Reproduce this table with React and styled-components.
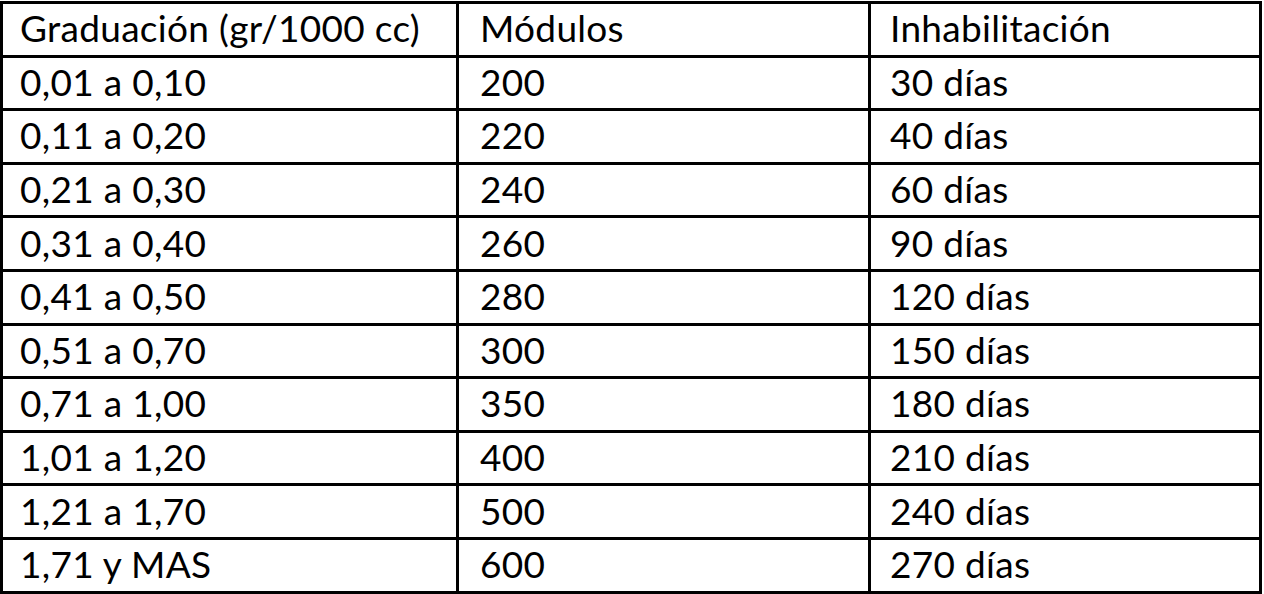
import styled, { createGlobalStyle } from "styled-components";

const GlobalStyle = createGlobalStyle`
  body {
    margin: 0;
    background: #ffffff;
  }
`;

const Page = styled.div`
  padding-top: 1px;
`;

const Table = styled.div`
  display: grid;
  grid-template-columns: 456px 412px 391px;
  grid-auto-rows: 53.6px;
  width: 1262px;
  box-sizing: border-box;
  border-left: 3px solid #000;
  border-top: 3px solid #000;
  font-family: Lato, "Open Sans", sans-serif;
  color: #000;
`;

const Cell = styled.div`
  display: flex;
  align-items: center;
  box-sizing: border-box;
  border-right: 3px solid #000;
  border-bottom: 3px solid #000;
  padding-left: ${(p) => p.$pad}px;
  padding-bottom: 3px;
  font-size: 37px;
  letter-spacing: 0.3px;
  white-space: nowrap;
`;

const pads = [17, 21, 19];

const header = ["Graduación (gr/1000 cc)", "Módulos", "Inhabilitación"];

const rows = [
  ["0,01 a 0,10", "200", "30 días"],
  ["0,11 a 0,20", "220", "40 días"],
  ["0,21 a 0,30", "240", "60 días"],
  ["0,31 a 0,40", "260", "90 días"],
  ["0,41 a 0,50", "280", "120 días"],
  ["0,51 a 0,70", "300", "150 días"],
  ["0,71 a 1,00", "350", "180 días"],
  ["1,01 a 1,20", "400", "210 días"],
  ["1,21 a 1,70", "500", "240 días"],
  ["1,71 y MAS", "600", "270 días"],
];

export default function App() {
  return (
    <Page>
      <GlobalStyle />
      <Table>
        {[header, ...rows].map((row, i) =>
          row.map((text, j) => (
            <Cell key={`${i}-${j}`} $pad={pads[j]}>
              {text}
            </Cell>
          ))
        )}
      </Table>
    </Page>
  );
}
